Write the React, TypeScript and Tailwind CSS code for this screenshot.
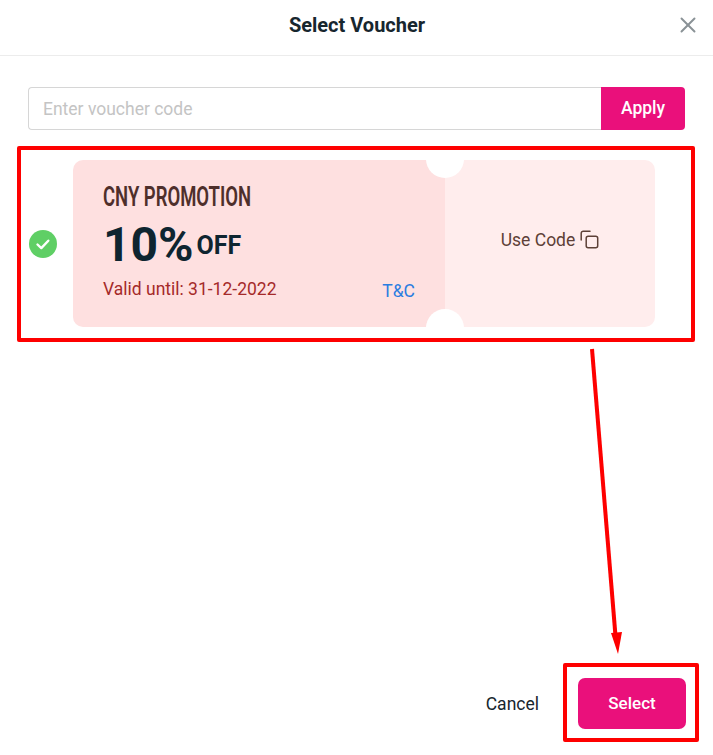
import { X } from 'lucide-react';

const font = { fontFamily: 'Roboto, sans-serif' };

function CheckBadge() {
  return (
    <svg width="28" height="28" viewBox="0 0 28 28" className="shrink-0">
      <circle cx="14" cy="14" r="14" fill="#5fcf65" />
      <path d="M8.5 14.5l3.8 3.6 7-7.4" fill="none" stroke="#fff" strokeWidth="2.4" strokeLinecap="round" strokeLinejoin="round" />
    </svg>
  );
}

function CopyIcon() {
  return (
    <svg width="19" height="19" viewBox="0 0 19 19" fill="none" stroke="#5d4037" strokeWidth="1.5" className="ml-[5px] -mt-[3px]">
      <rect x="6.2" y="6.2" width="11.5" height="11.5" rx="2" />
      <path d="M1.2 10V3.2a2 2 0 0 1 2-2H10" strokeLinecap="round" />
    </svg>
  );
}

function VoucherCard() {
  return (
    <div className="relative flex h-[167px] w-[582px] overflow-hidden rounded-[10px]">
      <div className="relative w-[372px] bg-[#fee0e0] pl-[30px] pt-[22px]">
        <div className="origin-left scale-x-[0.66] whitespace-nowrap text-[28px] font-semibold leading-[30px] text-[#4e2f2b]">
          CNY PROMOTION
        </div>
        <div className="mt-[5px] flex items-end text-[#0e2530]">
          <span className="text-[48px] font-bold leading-[56px]">10%</span>
          <span className="mb-[12px] ml-[3px] text-[25px] font-bold leading-[30px]">OFF</span>
        </div>
        <div className="mt-[4px] text-[17.5px] leading-[24px] text-[#a52a2a]">Valid until: 31-12-2022</div>
        <div className="absolute bottom-[24px] right-[30px] text-[17.5px] leading-[24px] text-[#2b7de0]">T&amp;C</div>
      </div>
      <div className="flex flex-1 items-center justify-center bg-[#ffeded] pb-[6px] text-[17.5px] text-[#5d4037]">
        Use Code
        <CopyIcon />
      </div>
      <div className="absolute left-[353px] top-[-20px] h-[38px] w-[38px] rounded-full bg-white" />
      <div className="absolute bottom-[-20px] left-[353px] h-[38px] w-[38px] rounded-full bg-white" />
    </div>
  );
}

export default function App() {
  return (
    <div className="relative flex h-[755px] w-[713px] flex-col overflow-hidden bg-white" style={font}>
      <header className="relative flex h-[56px] shrink-0 items-center justify-center border-b border-[#ececec]">
        <h1 className="-mt-[6px] ml-[1px] text-[20px] font-bold text-[#17262e]">Select Voucher</h1>
        <X className="absolute right-[12px] top-[12px] text-[#8a9296]" size={26} strokeWidth={1.8} />
      </header>

      <div className="flex flex-1 flex-col px-[28px] pt-[31px]">
        <div className="flex h-[43px] w-[657px]">
          <input
            placeholder="Enter voucher code"
            className="h-full flex-1 rounded-l-[4px] border border-r-0 border-[#d6d6d6] pl-[14px] text-[17.5px] outline-none placeholder:text-[#c4c4c4]"
          />
          <button className="h-full w-[84px] rounded-r-[4px] bg-[#ea107b] text-[17.5px] font-medium text-white">Apply</button>
        </div>
        <div className="mt-[30px] flex items-center gap-[16px] pl-px">
          <CheckBadge />
          <VoucherCard />
        </div>
      </div>

      <footer className="flex items-center justify-end pb-[26px] pr-[27px]">
        <button className="mr-[39px] mt-[2px] text-[17.5px] text-[#17262e]">Cancel</button>
        <button className="h-[51px] w-[108px] rounded-[7px] bg-[#ea107b] text-[17px] font-medium text-white">Select</button>
      </footer>

      {/* red annotations drawn on top of the screenshot */}
      <div className="pointer-events-none absolute left-[17px] top-[146px] h-[196px] w-[678px] rounded-[2px] border-[4px] border-[#fe0000]" />
      <div className="pointer-events-none absolute left-[563px] top-[663px] h-[79px] w-[136px] rounded-[2px] border-[4px] border-[#fe0000]" />
      <svg className="pointer-events-none absolute left-0 top-0" width="713" height="755">
        <line x1="592" y1="349" x2="615.5" y2="636" stroke="#fe0000" strokeWidth="4" />
        <polygon points="611,633 622,632 618,654" fill="#fe0000" />
      </svg>
    </div>
  );
}
